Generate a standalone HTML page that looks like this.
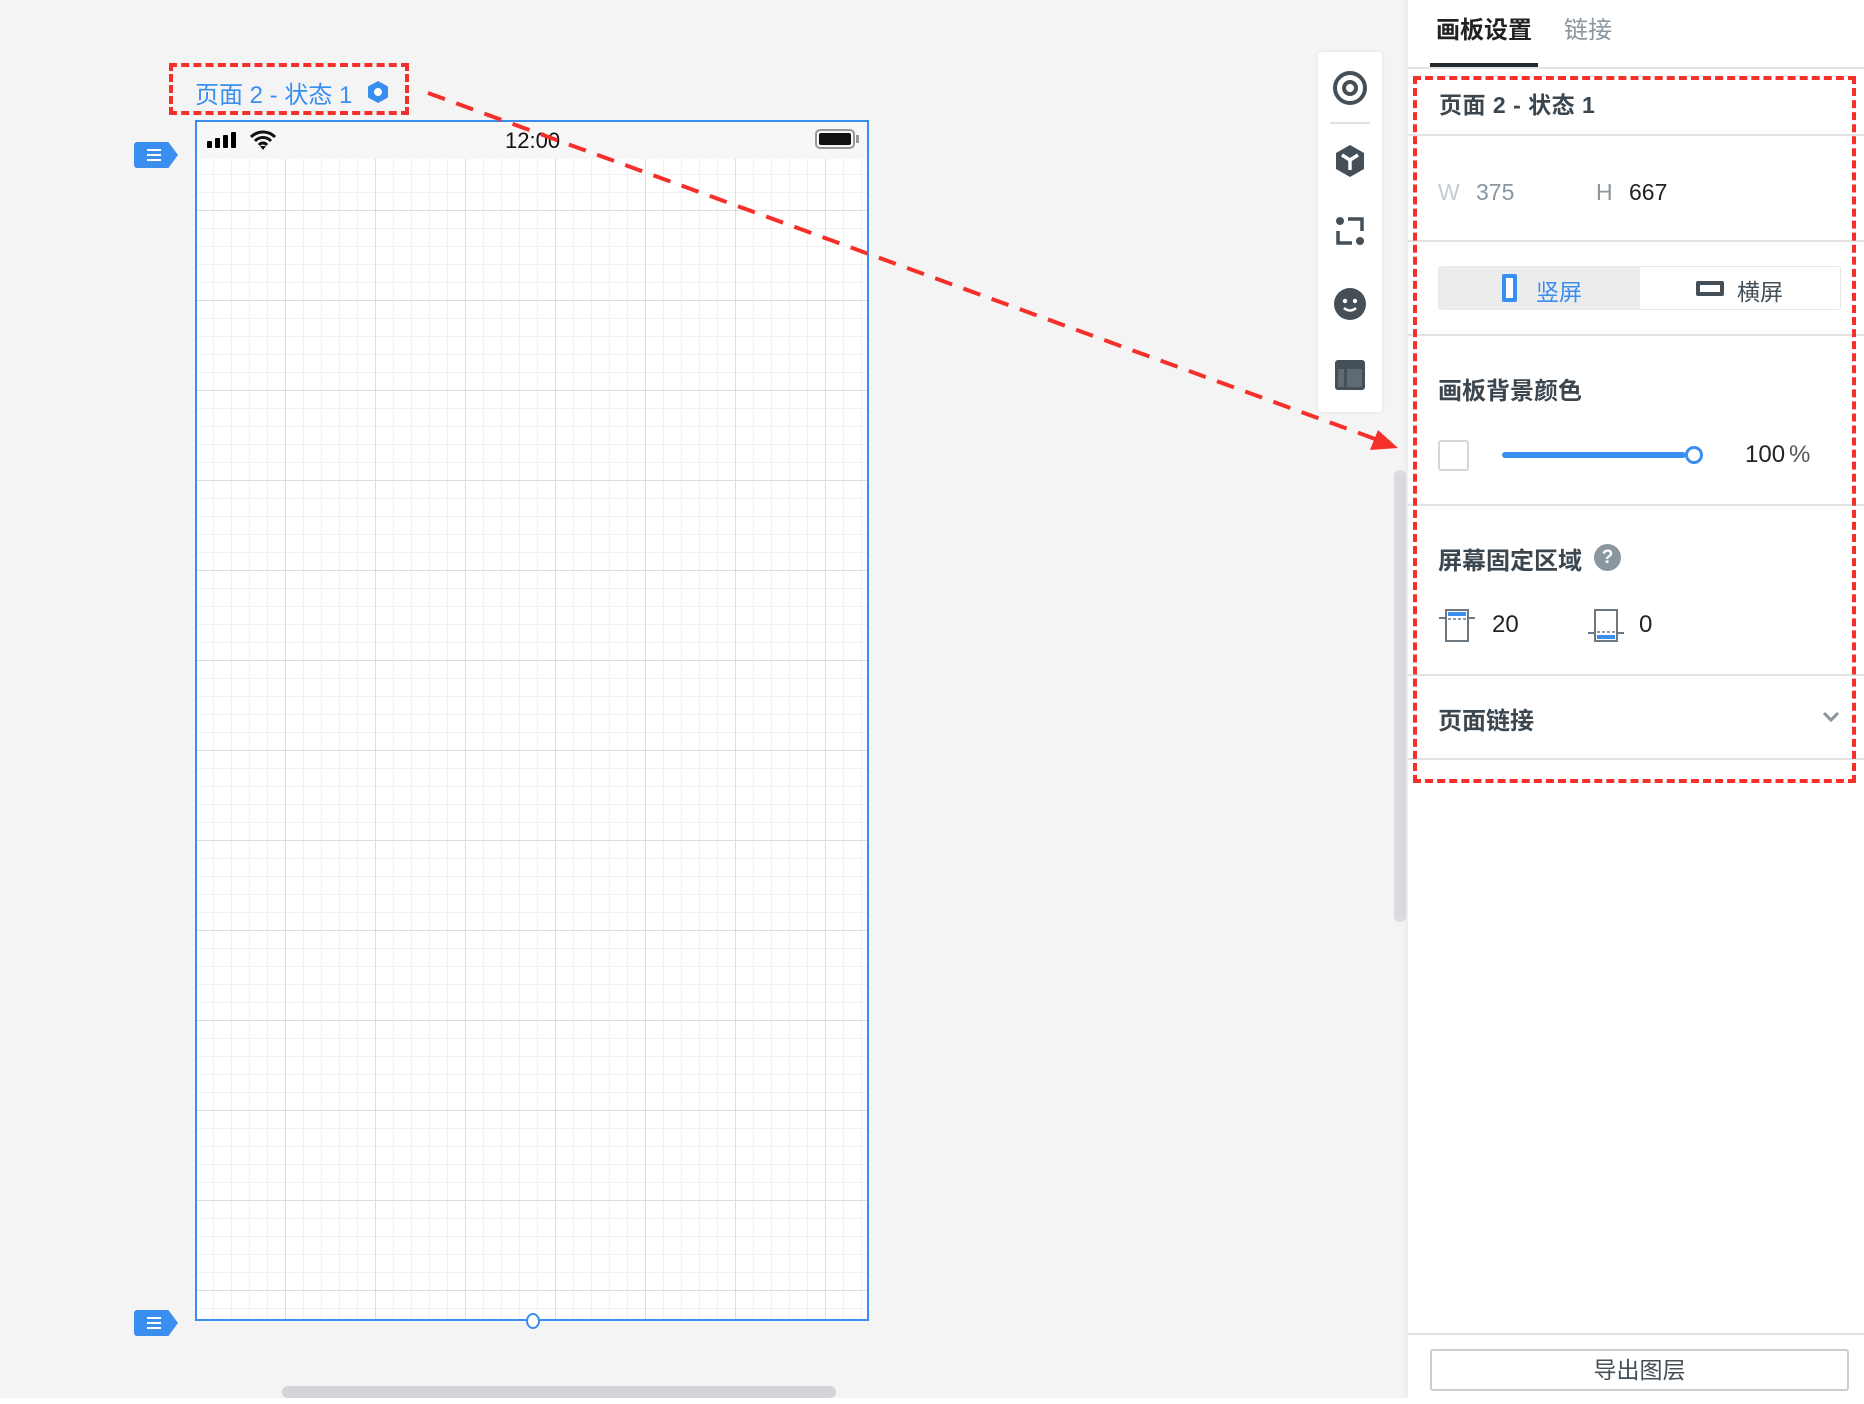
<!DOCTYPE html>
<html><head><meta charset="utf-8"><style>
*{margin:0;padding:0;box-sizing:border-box}
body{width:1864px;height:1404px;background:#f4f4f4;position:relative;overflow:hidden;font-family:"Liberation Sans","Noto Sans CJK SC",sans-serif}
.abs{position:absolute}
.phone{left:195px;top:120px;width:674px;height:1201px;border:2px solid #3a8ef0;background-color:#fff;
background-image:linear-gradient(#dedede 1px,transparent 1px),linear-gradient(90deg,#dedede 1px,transparent 1px),linear-gradient(#f1f1f1 1px,transparent 1px),linear-gradient(90deg,#f1f1f1 1px,transparent 1px);
background-size:90px 90px,90px 90px,18px 18px,18px 18px;background-position:-2px -2px}
.panel{left:1408px;top:0;width:456px;height:1398px;background:#fff}
.hr{position:absolute;left:0;right:0;height:2px;background:#e3e3e3}
.t{position:absolute;white-space:nowrap}
.marker{width:44px;height:26px;background:#3a8ef0;clip-path:polygon(0 0,78% 0,100% 50%,78% 100%,0 100%);border-radius:3px}
.marker i{position:absolute;left:13px;width:14px;height:2px;background:#fff}
</style></head><body>
<div class="t" style="left:195px;top:75px;font-size:24px;color:#3a8ef0">页面 2 - 状态 1</div>
<svg class="abs" style="left:366px;top:80px" width="24" height="24" viewBox="0 0 24 24"><polygon points="12,1 22,6.5 22,17.5 12,23 2,17.5 2,6.5" fill="#3a8ef0"/><circle cx="12" cy="12" r="4" fill="#fff"/></svg>
<div class="abs" style="left:169px;top:63px;width:240px;height:52px;border:4px dashed #f5302a"></div>

<div class="abs marker" style="left:134px;top:142px"><i style="top:7px"></i><i style="top:12px"></i><i style="top:17px"></i></div>
<div class="abs marker" style="left:134px;top:1310px"><i style="top:7px"></i><i style="top:12px"></i><i style="top:17px"></i></div>

<div class="abs phone">
 <div class="abs" style="left:0;top:0;width:670px;height:37px;background:#f7f7f7"></div>
 <svg class="abs" style="left:10px;top:10px" width="30" height="16"><rect x="0" y="9" width="5" height="7" rx="1"/><rect x="8" y="6" width="5" height="10" rx="1"/><rect x="16" y="3" width="5" height="13" rx="1"/><rect x="24" y="0" width="5" height="16" rx="1"/></svg>
 <svg class="abs" style="left:52px;top:8px" width="28" height="20" viewBox="0 0 28 20"><path d="M2 7a17 17 0 0 1 24 0M6 11a11 11 0 0 1 16 0M10 15a5 5 0 0 1 8 0" stroke="#111" stroke-width="3" fill="none"/><path d="M11 16l3 4l3-4z" fill="#111"/></svg>
 <div class="t" style="left:308px;top:6px;font-size:22px;color:#111">12:00</div>
 <div class="abs" style="left:618px;top:7px;width:40px;height:20px;border:2px solid #999;border-radius:5px;padding:2px"><div style="width:100%;height:100%;background:#111;border-radius:2px"></div></div>
 <div class="abs" style="left:659px;top:13px;width:3px;height:8px;background:#999"></div>
</div>
<div class="abs" style="left:526px;top:1313px;width:14px;height:16px;border:2px solid #3a8ef0;border-radius:50%;background:#fff"></div>

<div class="abs" style="left:282px;top:1386px;width:554px;height:12px;border-radius:6px;background:#d3d3d8"></div>
<div class="abs" style="left:1394px;top:470px;width:12px;height:452px;border-radius:6px;background:#dcdce0"></div>

<svg class="abs" style="left:0;top:0" width="1864" height="1404"><line x1="428" y1="93" x2="1378" y2="440" stroke="#f5302a" stroke-width="4" stroke-dasharray="18,12"/><polygon points="1398,448 1370,450 1378,430" fill="#f5302a"/></svg>

<div class="abs" style="left:1318px;top:52px;width:64px;height:360px;background:#fff;border-radius:4px;box-shadow:0 0 6px rgba(0,0,0,.06)">
 <svg class="abs" style="left:14px;top:18px" width="36" height="36"><circle cx="18" cy="18" r="15" fill="none" stroke="#444f57" stroke-width="4"/><circle cx="18" cy="18" r="6" fill="none" stroke="#444f57" stroke-width="4"/></svg>
 <div class="abs" style="left:12px;top:70px;width:40px;height:2px;background:#e0e0e0"></div>
 <svg class="abs" style="left:16px;top:92px" width="32" height="34" viewBox="0 0 32 34"><polygon points="16,1 30,9 30,25 16,33 2,25 2,9" fill="#444f57"/><path d="M8 11l8 5l8-5M16 16v10" stroke="#fff" stroke-width="3.5" fill="none"/></svg>
 <svg class="abs" style="left:17px;top:164px" width="30" height="30" viewBox="0 0 30 30"><circle cx="5" cy="5" r="4" fill="#444f57"/><circle cx="25" cy="25" r="4" fill="#444f57"/><path d="M13 3h14v12M3 15v12h14" stroke="#444f57" stroke-width="3.5" fill="none"/></svg>
 <svg class="abs" style="left:16px;top:236px" width="32" height="32"><circle cx="16" cy="16" r="16" fill="#444f57"/><circle cx="11" cy="13" r="2.2" fill="#fff"/><circle cx="21" cy="13" r="2.2" fill="#fff"/><path d="M10 20q6 5 12 0" stroke="#fff" stroke-width="2.5" fill="none"/></svg>
 <svg class="abs" style="left:17px;top:308px" width="30" height="30"><rect x="0" y="0" width="30" height="30" rx="3" fill="#444f57"/><rect x="3" y="9" width="6" height="18" fill="#5f6a72"/><rect x="12" y="9" width="15" height="18" fill="#5f6a72"/></svg>
</div>

<div class="abs panel" style="box-shadow:-3px 0 6px rgba(0,0,0,.04)">
 <div class="t" style="left:28px;top:10px;font-size:24px;font-weight:bold;color:#222">画板设置</div>
 <div class="t" style="left:156px;top:10px;font-size:24px;color:#8a959d">链接</div>
 <div class="abs" style="left:22px;top:63px;width:108px;height:4px;background:#222a30"></div>
 <div class="hr" style="top:67px"></div>
 <div class="t" style="left:31px;top:86px;font-size:23px;font-weight:bold;color:#3b464e;letter-spacing:.5px">页面 2 - 状态 1</div>
 <div class="hr" style="top:134px"></div>
 <div class="t" style="left:30px;top:179px;font-size:23px;color:#c5ccd1">W</div>
 <div class="t" style="left:68px;top:179px;font-size:23px;color:#8a959d">375</div>
 <div class="t" style="left:188px;top:179px;font-size:23px;color:#8a959d">H</div>
 <div class="t" style="left:221px;top:179px;font-size:23px;color:#222">667</div>
 <div class="hr" style="top:240px"></div>
 <div class="abs" style="left:30px;top:266px;width:403px;height:44px;background:#ececec;border-radius:3px;border:1px solid #e8e8e8"></div>
 <div class="abs" style="left:232px;top:267px;width:200px;height:42px;background:#fff"></div>
 <div class="abs" style="left:94px;top:274px;width:15px;height:28px;border:4px solid #3a8ef0;border-radius:2px;background:#fff"></div>
 <div class="t" style="left:128px;top:273px;font-size:23px;color:#3a8ef0">竖屏</div>
 <div class="abs" style="left:288px;top:281px;width:28px;height:15px;border:4px solid #444f57;border-radius:2px"></div>
 <div class="t" style="left:329px;top:273px;font-size:23px;color:#444f57">横屏</div>
 <div class="hr" style="top:334px"></div>
 <div class="t" style="left:30px;top:371px;font-size:24px;font-weight:bold;color:#3b464e">画板背景颜色</div>
 <div class="abs" style="left:30px;top:440px;width:31px;height:31px;border:2px solid #d6d6d6;border-radius:3px"></div>
 <div class="abs" style="left:94px;top:452px;width:184px;height:6px;border-radius:3px;background:#3a8ef0"></div>
 <div class="abs" style="left:277px;top:446px;width:18px;height:18px;border:3px solid #3a8ef0;border-radius:50%;background:#fff"></div>
 <div class="t" style="left:337px;top:441px;font-size:24px;color:#222">100<span style="color:#555;margin-left:4px">%</span></div>
 <div class="hr" style="top:504px"></div>
 <div class="t" style="left:30px;top:541px;font-size:24px;font-weight:bold;color:#3b464e">屏幕固定区域</div>
 <div class="abs" style="left:186px;top:544px;width:27px;height:27px;border-radius:50%;background:#8a979e;color:#fff;font-weight:bold;font-size:19px;text-align:center;line-height:27px">?</div>
 <svg class="abs" style="left:31px;top:608px" width="38" height="35"><path d="M0 10h36" stroke="#6c777f" stroke-width="2"/><rect x="7" y="2" width="22" height="31" fill="#fff" stroke="#6c777f" stroke-width="2"/><rect x="9" y="4" width="18" height="4" fill="#3a8ef0"/><path d="M9 11h18" stroke="#6c777f" stroke-width="1.5" stroke-dasharray="3,2"/></svg>
 <div class="t" style="left:84px;top:611px;font-size:24px;color:#222">20</div>
 <svg class="abs" style="left:180px;top:608px" width="38" height="35"><path d="M0 25h36" stroke="#6c777f" stroke-width="2"/><rect x="7" y="2" width="22" height="31" fill="#fff" stroke="#6c777f" stroke-width="2"/><rect x="9" y="27" width="18" height="4" fill="#3a8ef0"/><path d="M9 24h18" stroke="#6c777f" stroke-width="1.5" stroke-dasharray="3,2"/></svg>
 <div class="t" style="left:231px;top:611px;font-size:24px;color:#222">0</div>
 <div class="hr" style="top:674px"></div>
 <div class="t" style="left:30px;top:701px;font-size:24px;font-weight:bold;color:#3b464e">页面链接</div>
 <svg class="abs" style="left:414px;top:711px" width="18" height="12"><path d="M2 2l7 7l7-7" stroke="#8a959d" stroke-width="3" fill="none"/></svg>
 <div class="hr" style="top:758px"></div>
 <div class="hr" style="top:1333px"></div>
 <div class="abs" style="left:22px;top:1349px;width:419px;height:42px;border:2px solid #c9ced2;border-radius:3px;text-align:center;font-size:23px;line-height:38px;color:#444f57">导出图层</div>
</div>
<div class="abs" style="left:1413px;top:76px;width:443px;height:707px;border:4px dashed #f5302a"></div>
<div class="abs" style="left:0;top:1398px;width:1864px;height:6px;background:#fff"></div>
</body></html>
